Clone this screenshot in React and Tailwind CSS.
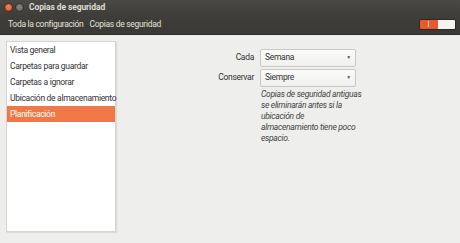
export default function App() {
  const items = [
    "Vista general",
    "Carpetas para guardar",
    "Carpetas a ignorar",
    "Ubicación de almacenamiento",
    "Planificación",
  ];
  const font = { fontFamily: 'Roboto, "Noto Sans", sans-serif' };
  return (
    <div className="w-[460px] h-[243px] flex flex-col bg-[#eeeeec] overflow-hidden text-[8.5px] tracking-[-0.3px]" style={font}>
      <div className="h-[14px] flex items-center bg-gradient-to-b from-[#4a4945] to-[#3f3e3a]">
        <div className="ml-[4px] w-[9px] h-[9px] rounded-full bg-[radial-gradient(circle_at_50%_40%,#f28a5e,#d7461d)] border border-[#5a2a18]" />
        <div className="ml-[2px] w-[9px] h-[9px] rounded-full bg-[radial-gradient(circle_at_50%_40%,#8b8a85,#5d5c57)] border border-[#33322f]" />
        <div className="ml-[5px] text-[#dfdbd2] font-bold text-[8.5px] tracking-[-0.1px] whitespace-nowrap">Copias de seguridad</div>
      </div>
      <div className="h-[21px] flex items-center bg-gradient-to-b from-[#3f3e3a] to-[#3a3935] border-b border-[#2e2d2a] pl-[8px] pr-[4px]">
        <span className="text-[#e4e1da] whitespace-nowrap">Toda la configuración</span>
        <span className="ml-[6px] text-[#e4e1da] whitespace-nowrap">Copias de seguridad</span>
        <div className="ml-auto flex h-[11px] w-[37px] rounded-[2px] overflow-hidden border border-[#2a2926]">
          <div className="w-1/2 bg-[#e9592c] flex items-center justify-center">
            <div className="w-[1px] h-[6px] bg-[#f7d7c8]" />
          </div>
          <div className="w-1/2 bg-[#f4f3f1]" />
        </div>
      </div>
      <div className="flex-1 flex pt-[6px] pb-[11px] pl-[6px]">
        <div className="w-[110px] bg-white border border-[#d4d4d0] shadow-[1px_1px_1px_rgba(0,0,0,0.08)] flex flex-col">
          {items.map((it, i) => (
            <div
              key={it}
              className={
                "h-[16px] flex items-center pl-[3px] whitespace-nowrap " +
                (i === 4 ? "bg-[#f07746] text-white" : "text-[#333333]")
              }
            >
              {it}
            </div>
          ))}
        </div>
        <div className="flex-1 flex flex-col pt-[7px] pl-[98px]">
          <div className="flex items-center h-[19px]">
            <div className="w-[40px] text-right text-[#333333]">Cada</div>
            <div className="ml-[6px] w-[96px] h-[18px] rounded-[2px] border border-[#c8c8c4] bg-gradient-to-b from-[#fbfbfa] to-[#f0f0ee] flex items-center px-[4px] text-[#333333]">
              <span>Semana</span>
              <span className="ml-auto text-[5px] text-[#555]">▼</span>
            </div>
          </div>
          <div className="flex items-center h-[19px] mt-[1px]">
            <div className="w-[40px] text-right text-[#333333]">Conservar</div>
            <div className="ml-[6px] w-[96px] h-[18px] rounded-[2px] border border-[#c8c8c4] bg-gradient-to-b from-[#fbfbfa] to-[#f0f0ee] flex items-center px-[4px] text-[#333333]">
              <span>Siempre</span>
              <span className="ml-auto text-[5px] text-[#555]">▼</span>
            </div>
          </div>
          <div className="ml-[47px] mt-[2px] italic text-[#444444] leading-[11px] whitespace-nowrap">
            Copias de seguridad antiguas
            <br />
            se eliminarán antes si la
            <br />
            ubicación de
            <br />
            almacenamiento tiene poco
            <br />
            espacio.
          </div>
        </div>
      </div>
    </div>
  );
}
